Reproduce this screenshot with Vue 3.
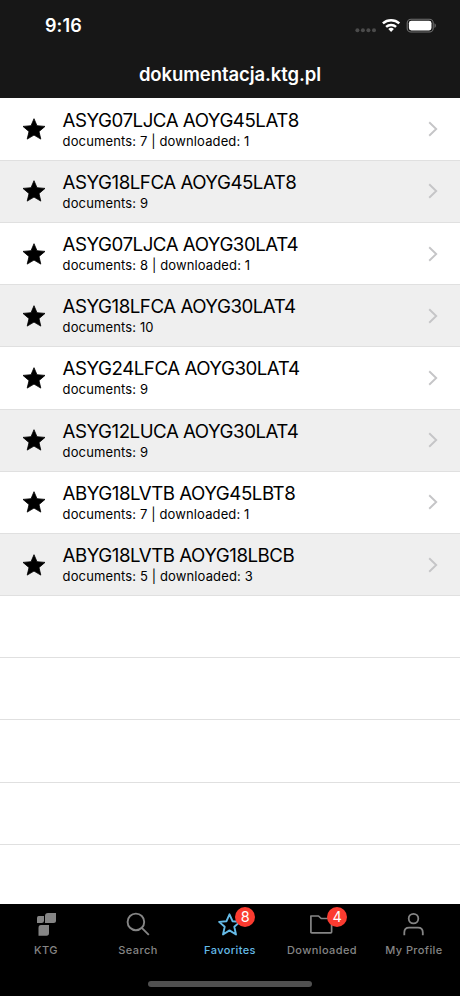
<template>
  <div class="screen">
    <header class="header">
      <div class="status-bar">
        <span class="clock">9:16</span>
        <svg class="status-icons" width="81" height="16" viewBox="0 0 81 16">
          <g fill="#4b4b4b">
            <circle cx="2.4" cy="12.3" r="2" />
            <circle cx="7.9" cy="12.3" r="2" />
            <circle cx="13.4" cy="12.3" r="2" />
            <circle cx="19" cy="12.3" r="2" />
          </g>
          <g fill="none" stroke="#fff" stroke-width="2.5">
            <path d="M27.9 5.4a12.3 12.3 0 0 1 16.400 0" />
            <path d="M31.100 8.900a7.600 7.600 0 0 1 10 0" />
          </g>
          <path d="M36.100 13.900l-2.800-2.900a4 4 0 0 1 5.600 0z" fill="#fff" />
          <rect x="52.200" y="1.200" width="26" height="12.800" rx="3.800" fill="none" stroke="#707070" stroke-width="1.100" />
          <rect x="53.900" y="2.800" width="22.600" height="9.600" rx="2.400" fill="#fff" />
          <path d="M79.500 5.300v4.600c1-.4 1.300-1.300 1.300-2.300s-.3-1.900-1.300-2.300z" fill="#707070" />
        </svg>
      </div>
      <h1 class="title">dokumentacja.ktg.pl</h1>
    </header>

    <main class="list">
      <div
        v-for="(item, i) in items"
        :key="item.name"
        class="row"
        :class="{ 'row--alt': i % 2 === 1 }"
      >
        <svg class="row-star" width="24" height="24" viewBox="0 0 24 24">
          <path d="M12 1.700l3 7 8 .7-6 5.200 1.800 7.500L12 18.100l-6.800 4L7 14.600 1 9.400l8-.7z" fill="#000" stroke="#000" stroke-width=".8" stroke-linejoin="round" />
        </svg>
        <div class="row-text">
          <div class="row-name">{{ item.name }}</div>
          <div class="row-info">{{ info(item) }}</div>
        </div>
        <svg class="row-chevron" width="10" height="16" viewBox="0 0 10 16" fill="none" stroke="#c5c5c7" stroke-width="1.9">
          <path d="M1.200 1.300L8.200 8l-7 6.700" />
        </svg>
      </div>
      <div v-for="n in 4" :key="n" class="row"></div>
    </main>

    <nav class="tab-bar">
      <div class="tabs">
        <button
          v-for="tab in tabs"
          :key="tab.id"
          class="tab"
          :class="{ 'tab--active': tab.id === active }"
          @click="active = tab.id"
        >
          <span class="tab-icon">
            <svg v-if="tab.id === 'ktg'" width="26" height="26" viewBox="0 0 26 26" fill="currentColor">
              <path d="M5.700 5H11v4.700Q11 12 8.700 12H4V6.700Q4 5 5.700 5z" />
              <path d="M15 2h8v7.500Q23 12 20.500 12H12V5Q12 2 15 2z" />
              <path d="M8 14h8v8q0 2.700-2.500 2.700h-8v-8Q5.500 14 8 14z" />
            </svg>
            <svg v-else-if="tab.id === 'search'" width="26" height="26" viewBox="0 0 26 26" fill="none" stroke="currentColor" stroke-width="1.900">
              <circle cx="10.900" cy="10.900" r="8.300" />
              <path d="M16.800 16.800l7 7" />
            </svg>
            <svg v-else-if="tab.id === 'favorites'" width="26" height="26" viewBox="0 0 26 26" fill="none" stroke="currentColor" stroke-width="1.900" stroke-linejoin="round">
              <path d="M12.500 3.300l3 6.900 7.400.700-5.600 4.900 1.700 7.700-6.500-4.100L6 23.500l1.700-7.700-5.600-4.900 7.400-.700z" />
            </svg>
            <svg v-else-if="tab.id === 'downloaded'" width="26" height="26" viewBox="0 0 26 26" fill="none" stroke="currentColor" stroke-width="1.700" stroke-linejoin="round">
              <path d="M1.900 5h7.600l2.700 2.500h10.400v13.500q0 .9-.9.900H2.800q-.9 0-.9-.9z" />
            </svg>
            <svg v-else width="26" height="26" viewBox="0 0 26 26" fill="none" stroke="currentColor" stroke-width="1.800">
              <circle cx="12.500" cy="7.600" r="4.800" />
              <path d="M3.300 24.200v-2.800q0-4.800 4.800-4.800H17q4.800 0 4.800 4.800v2.800" />
            </svg>
            <span v-if="tab.badge" class="badge">{{ tab.badge }}</span>
          </span>
          <span class="tab-label">{{ tab.label }}</span>
        </button>
      </div>
      <div class="home-indicator"></div>
    </nav>
  </div>
</template>

<script setup>
import { ref } from 'vue'

const items = ref([
  { name: 'ASYG07LJCA AOYG45LAT8', documents: 7, downloaded: 1 },
  { name: 'ASYG18LFCA AOYG45LAT8', documents: 9, downloaded: 0 },
  { name: 'ASYG07LJCA AOYG30LAT4', documents: 8, downloaded: 1 },
  { name: 'ASYG18LFCA AOYG30LAT4', documents: 10, downloaded: 0 },
  { name: 'ASYG24LFCA AOYG30LAT4', documents: 9, downloaded: 0 },
  { name: 'ASYG12LUCA AOYG30LAT4', documents: 9, downloaded: 0 },
  { name: 'ABYG18LVTB AOYG45LBT8', documents: 7, downloaded: 1 },
  { name: 'ABYG18LVTB AOYG18LBCB', documents: 5, downloaded: 3 },
])

const tabs = [
  { id: 'ktg',        label: 'KTG' },
  { id: 'search',     label: 'Search' },
  { id: 'favorites',  label: 'Favorites',  badge: 8 },
  { id: 'downloaded', label: 'Downloaded', badge: 4 },
  { id: 'profile',    label: 'My Profile' },
]

const active = ref('favorites')

function info(item) {
  const text = `documents: ${item.documents}`
  return item.downloaded ? `${text} | downloaded: ${item.downloaded}` : text
}
</script>

<style>
body { background: #fff; }
</style>

<style scoped>
.screen {
  width: 100%;
  height: 996px;
  display: flex;
  flex-direction: column;
  overflow: hidden;
  background: #fff;
  font-family: 'Inter', sans-serif;
  color: #000;
}

.header {
  height: 98px;
  flex-shrink: 0;
  background: #171717;
  color: #fff;
}

.status-bar {
  height: 51px;
  box-sizing: border-box;
  padding: 0 24px 0 45px;
  display: flex;
  align-items: center;
  justify-content: space-between;
}

.clock {
  font-size: 18px;
  font-weight: 600;
  letter-spacing: 0.1px;
}

.title {
  margin: 0;
  height: 46px;
  line-height: 46px;
  text-align: center;
  font-size: 18.5px;
  font-weight: 600;
  letter-spacing: -0.08px;
}

.list {
  flex: 1;
  min-height: 0;
  padding-top: 0.6px;
  overflow: hidden;
}

.row {
  height: 62.2px;
  box-sizing: border-box;
  padding: 0 22px;
  display: flex;
  align-items: center;
  border-bottom: 1px solid #e0e0e0;
}
.row--alt { background: #efefef; }

.row-star { flex-shrink: 0; }

.row-text {
  flex: 1;
  margin-left: 16.6px;
  white-space: nowrap;
}

.row-name {
  height: 23px;
  line-height: 23px;
  font-size: 18.7px;
  letter-spacing: -0.48px;
}

.row-info {
  height: 18px;
  line-height: 18px;
  font-size: 13px;
  letter-spacing: 0.13px;
}

.row-chevron { flex-shrink: 0; }

.tab-bar {
  height: 92.4px;
  flex-shrink: 0;
  background: #000;
  display: flex;
  flex-direction: column;
  align-items: center;
}

.tabs {
  width: 100%;
  height: 77.4px;
  display: flex;
}

.tab {
  flex: 1 1 0;
  min-width: 0;
  padding: 7.4px 0 0;
  border: none;
  background: none;
  display: flex;
  flex-direction: column;
  align-items: center;
  font-family: inherit;
  color: #858585;
  cursor: pointer;
}
.tab--active { color: #65bbe8; }

.tab-icon {
  position: relative;
  width: 26px;
  height: 26px;
}
.tab-icon svg { display: block; }

.tab-label {
  margin-top: 6px;
  line-height: 15px;
  font-size: 11px;
  font-weight: 450;
  letter-spacing: 0.4px;
  white-space: nowrap;
}

.badge {
  position: absolute;
  top: -4px;
  left: 18.3px;
  width: 20px;
  height: 20px;
  border-radius: 50%;
  background: #fb3b30;
  color: #fff;
  font-size: 14.5px;
  line-height: 20px;
  text-align: center;
}

.home-indicator {
  width: 164px;
  height: 5.5px;
  border-radius: 3px;
  background: #505050;
}
</style>
